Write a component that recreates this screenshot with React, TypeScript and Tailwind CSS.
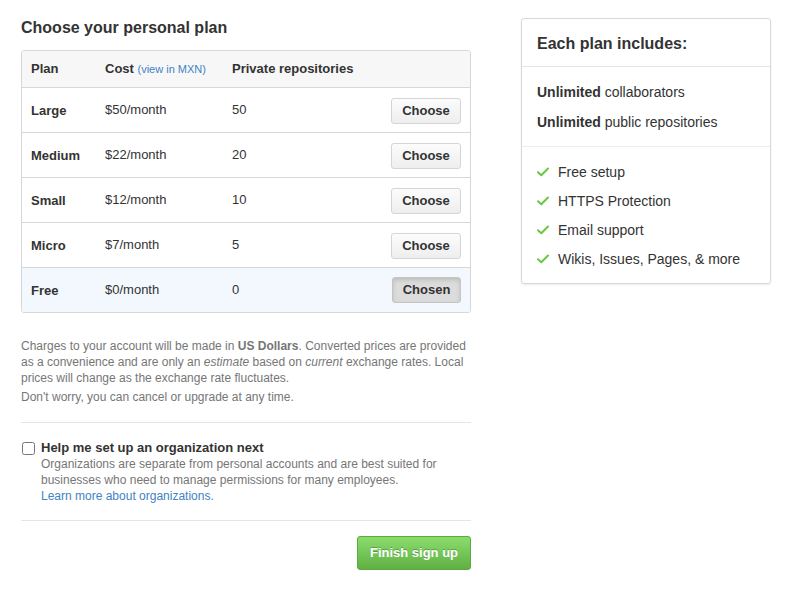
import React from 'react';

const plans = [
  { name: 'Large', cost: '$50/month', repos: '50' },
  { name: 'Medium', cost: '$22/month', repos: '20' },
  { name: 'Small', cost: '$12/month', repos: '10' },
  { name: 'Micro', cost: '$7/month', repos: '5' },
  { name: 'Free', cost: '$0/month', repos: '0', chosen: true },
];

const features = ['Free setup', 'HTTPS Protection', 'Email support', 'Wikis, Issues, Pages, & more'];

const Check: React.FC = () => (
  <svg width="12" height="10" viewBox="0 0 12 10" className="shrink-0">
    <path d="M1 5.2 L4.3 8.3 L11 1.5" fill="none" stroke="#6cc644" strokeWidth="2" strokeLinecap="round" strokeLinejoin="round" />
  </svg>
);

export default function App() {
  return (
    <div className="min-h-screen bg-white text-[#333] font-['Liberation_Sans',Helvetica,Arial,sans-serif]">
      <div className="flex gap-[50px] pl-[21px] pt-[18px]">
        {/* Left column: plan table */}
        <div className="w-[450px]">
          <h2 className="text-[16px] leading-[20px] font-bold">Choose your personal plan</h2>

          <div className="mt-[12px] border border-[#d8d8d8] rounded-[3px] overflow-hidden">
            <div className="grid grid-cols-[74px_127px_1fr_auto] items-center h-[37px] pl-[9px] pr-[9px] bg-[#f7f7f7] border-b border-[#d8d8d8] text-[13px] font-bold">
              <span>Plan</span>
              <span>
                Cost <span className="text-[11px] font-normal text-[#4183c4]">(view in MXN)</span>
              </span>
              <span>Private repositories</span>
              <span />
            </div>
            {plans.map((p, i) => (
              <div
                key={p.name}
                className={`grid grid-cols-[74px_127px_1fr_auto] items-center pl-[9px] pr-[9px] text-[13px] ${
                  i < plans.length - 1 ? 'h-[45px] border-b border-[#d8d8d8]' : 'h-[44px]'
                } ${p.chosen ? 'bg-[#f2f8fd]' : 'bg-white'}`}
              >
                <span className="font-bold pt-[2px]">{p.name}</span>
                <span>{p.cost}</span>
                <span>{p.repos}</span>
                {p.chosen ? (
                  <button className="w-[69px] h-[26px] rounded-[3px] border border-[#c5c5c5] bg-[#dcdcdc] shadow-[inset_0_2px_4px_rgba(0,0,0,0.15)] text-[13px] font-bold text-[#333]">
                    Chosen
                  </button>
                ) : (
                  <button className="w-[70px] h-[26px] mt-[1px] rounded-[3px] border border-[#d5d5d5] bg-gradient-to-b from-[#fcfcfc] to-[#eeeeee] text-[13px] font-bold text-[#333]">
                    Choose
                  </button>
                )}
              </div>
            ))}
          </div>

          <p className="mt-[25px] text-[12px] leading-[16px] text-[#767676]">
            Charges to your account will be made in <strong>US Dollars</strong>. Converted prices are provided as a
            convenience and are only an <em>estimate</em> based on <em>current</em> exchange rates. Local prices will
            change as the exchange rate fluctuates.
          </p>
          <p className="mt-[3px] text-[12px] leading-[16px] text-[#767676]">Don't worry, you can cancel or upgrade at any time.</p>

          <div className="mt-[17px] border-t border-[#e5e5e5]" />

          {/* Organization checkbox */}
          <div className="flex items-start pt-[17px] pb-[16px]">
            <input type="checkbox" className="w-[13px] h-[13px] mt-[2px] ml-[1px] mr-[6px] accent-[#4183c4]" />
            <div>
              <div className="text-[13px] leading-[16px] font-bold">Help me set up an organization next</div>
              <p className="text-[12px] leading-[16px] text-[#767676]">
                Organizations are separate from personal accounts and are best suited for businesses who need to manage
                permissions for many employees.
              </p>
              <a className="block text-[12px] leading-[16px] text-[#4183c4]" href="#">
                Learn more about organizations.
              </a>
            </div>
          </div>

          <div className="border-t border-[#e5e5e5]" />

          <div className="flex justify-end pt-[15px]">
            <button className="w-[114px] h-[34px] rounded-[3px] border border-[#5ca941] bg-gradient-to-b from-[#8add6d] to-[#60b044] text-[13px] font-bold text-white [text-shadow:0_-1px_0_rgba(0,0,0,0.25)]">
              Finish sign up
            </button>
          </div>
        </div>

        {/* Right column: includes box */}
        <div className="w-[250px] self-start border border-[#d8d8d8] rounded-[3px] shadow-[0_1px_2px_rgba(0,0,0,0.08)]">
          <div className="h-[48px] flex items-center px-[15px] pt-[2px] border-b border-[#e5e5e5] text-[16px] font-bold">
            Each plan includes:
          </div>
          <div className="px-[15px] pt-[15px] pb-[14px] text-[14px] leading-[20px] flex flex-col gap-[10px] border-b border-[#eeeeee]">
            <div>
              <strong>Unlimited</strong> collaborators
            </div>
            <div>
              <strong>Unlimited</strong> public repositories
            </div>
          </div>
          <ul className="px-[15px] pt-[15px] pb-[14px] text-[14px] leading-[20px] flex flex-col gap-[9px]">
            {features.map((f) => (
              <li key={f} className="flex items-center gap-[9px]">
                <Check />
                <span>{f}</span>
              </li>
            ))}
          </ul>
        </div>
      </div>
    </div>
  );
}
